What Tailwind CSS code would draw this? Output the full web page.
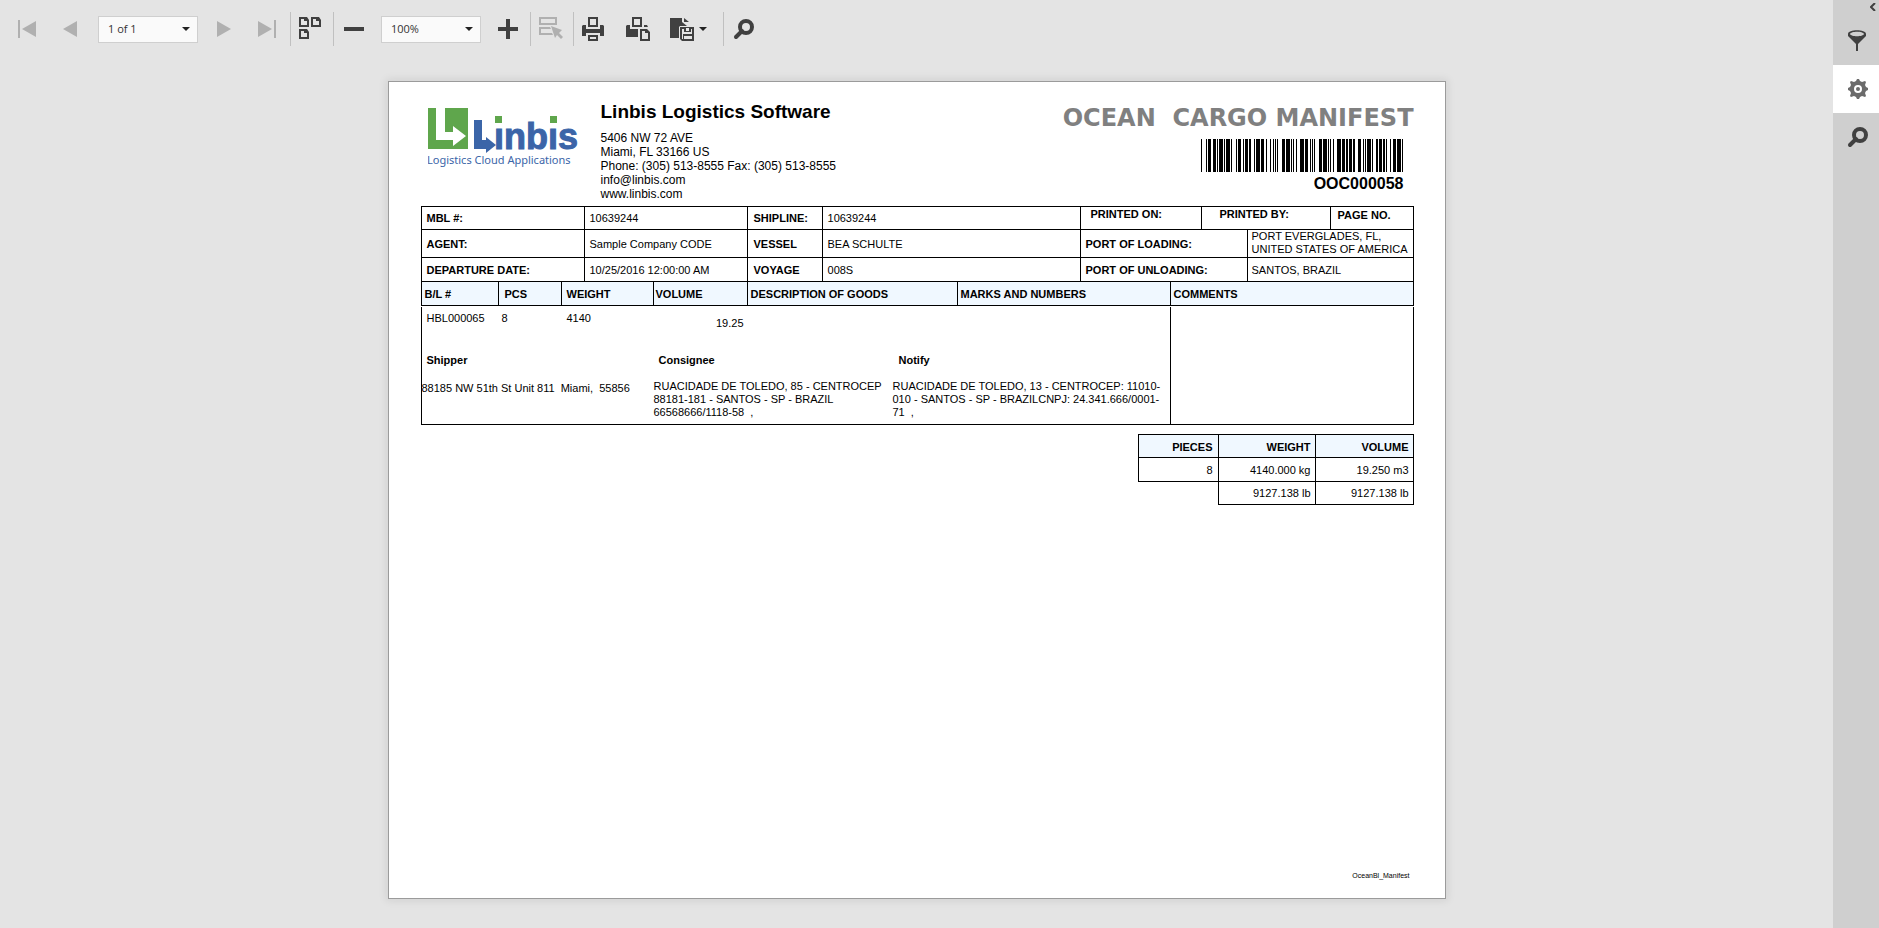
<!DOCTYPE html>
<html lang="en">
<head>
<meta charset="utf-8">
<title>Ocean Cargo Manifest</title>
<script src="https://cdn.jsdelivr.net/npm/@tailwindcss/browser@4"></script>
</head>
<body class="flex min-h-screen bg-[#e4e4e4] font-['Liberation_Sans',Arial,sans-serif] text-black">
<main class="min-w-0 flex-1">
  <!-- Viewer toolbar -->
  <div role="toolbar" aria-label="Report viewer" class="flex h-[58px] items-center pl-[5px] text-[#404040]">
    <button aria-label="First page" class="flex w-11 justify-center text-[#b0b0b0]"><svg class="size-6" viewBox="0 0 24 24" fill="currentColor"><path d="M3 3h2v18H3zM21 4v16L7 12z"/></svg></button>
    <button aria-label="Previous page" class="flex w-11 justify-center text-[#b0b0b0]"><svg class="size-6" viewBox="0 0 24 24" fill="currentColor"><path d="M18 4v16L4 12z"/></svg></button>
    <div class="relative ml-[5px]">
      <select aria-label="Page" class="block h-[27px] w-[100px] appearance-none rounded-none border border-[#cfcfcf] bg-[#fafafa] pl-[9px] font-['Open_Sans',sans-serif] text-[11px] text-[#333]"><option>1 of 1</option></select>
      <svg class="pointer-events-none absolute top-[11px] right-2 h-1 w-2" viewBox="0 0 8 4" fill="#222"><path d="M0 0h8L4 4z"/></svg>
    </div>
    <button aria-label="Next page" class="ml-1 flex w-11 justify-center text-[#b0b0b0]"><svg class="size-6" viewBox="0 0 24 24" fill="currentColor"><path d="M5 4l14 8-14 8z"/></svg></button>
    <button aria-label="Last page" class="flex w-11 justify-center text-[#b0b0b0]"><svg class="size-6" viewBox="0 0 24 24" fill="currentColor"><path d="M2 4l14 8-14 8zM18 3h2v18h-2z"/></svg></button>
    <div class="h-[34px] w-px bg-[#c0c0c0]"></div>
    <button aria-label="Toggle multipage mode" class="flex w-10 justify-center"><svg class="size-6" viewBox="0 0 24 24" fill="currentColor" fill-rule="evenodd"><path d="M0 0h8l2 3v7H0zM2 2v6h6V4H5V2zM12 0h8l2 3v7H12zM14 2v6h6V4h-3V2zM0 12h8l2 3v7H0zM2 14v6h6v-4H5v-2z"/></svg></button>
    <div class="ml-0.5 h-[34px] w-px bg-[#c0c0c0]"></div>
    <button aria-label="Zoom out" class="flex w-10 justify-center"><svg class="size-6" viewBox="0 0 24 24" fill="currentColor"><path d="M2 10h20v4H2z"/></svg></button>
    <div class="relative ml-[7px]">
      <select aria-label="Zoom" class="block h-[27px] w-[100px] appearance-none rounded-none border border-[#cfcfcf] bg-[#fafafa] pl-[9px] font-['Open_Sans',sans-serif] text-[11px] text-[#333]"><option>100%</option></select>
      <svg class="pointer-events-none absolute top-[11px] right-2 h-1 w-2" viewBox="0 0 8 4" fill="#222"><path d="M0 0h8L4 4z"/></svg>
    </div>
    <button aria-label="Zoom in" class="ml-[7px] flex w-10 justify-center"><svg class="size-6" viewBox="0 0 24 24" fill="currentColor"><path d="M2 10h8V2h4v8h8v4h-8v8h-4v-8H2z"/></svg></button>
    <div class="ml-0.5 h-[34px] w-px bg-[#c0c0c0]"></div>
    <button aria-label="Highlight editing fields" class="flex w-10 justify-center text-[#b0b0b0]"><svg class="size-6" viewBox="0 0 24 24" fill="currentColor" fill-rule="evenodd"><path d="M0 0h18v8H0zM2 2v4h14V2zM0 10h11l1 2H2v4h11l1 2H0zM12 9l11 4-3 3 4 4-2 2-4-4-2 3z"/></svg></button>
    <div class="ml-0.5 h-[34px] w-px bg-[#c0c0c0]"></div>
    <button aria-label="Print" class="flex w-10 justify-center"><svg class="size-6" viewBox="0 0 24 24" fill="currentColor" fill-rule="evenodd"><path d="M6 0h10v10H6zM8 2v6h6V2zM1 8h3v4h14V8h3l1 1v10h-4v-3H4v3H0V9zM6 18h10v6H6zM8 20v2h6v-2z"/></svg></button>
    <button aria-label="Print page" class="flex w-12 justify-center"><svg class="size-6" viewBox="0 0 24 24" fill="currentColor" fill-rule="evenodd"><path d="M6 0h10v10H6zM8 2v6h6V2zM1 8h3v4h8v8H0V9zM18 8h3l1 2h-4zM14 12h7l3 3v9H14zM16 14v8h6v-6h-3v-2z"/></svg></button>
    <button aria-label="Export to" class="flex w-[61px] items-center gap-[5px] pl-2"><svg class="size-6" viewBox="0 0 24 24" fill="currentColor" fill-rule="evenodd"><path d="M0 1h12v4l5 4H10l-1 1v11H0zM14 1l5 4h-5zM10 10h14v14H12l-2-2zM12 12v10h1v-5h9v-5h-1v3h-7v-3zM16 11h3v3h-3zM14 19v3h8v-3z"/></svg><svg class="h-1 w-2" viewBox="0 0 8 4" fill="#222"><path d="M0 0h8L4 4z"/></svg></button>
    <div class="h-[34px] w-px bg-[#c0c0c0]"></div>
    <button aria-label="Search" class="flex w-10 justify-center"><svg class="size-6" viewBox="0 0 24 24" fill="none" stroke="currentColor" stroke-width="4"><circle cx="14" cy="10" r="6"/><path d="M10 14l-6 6" stroke-linecap="round"/></svg></button>
  </div>

  <!-- Report sheet -->
  <article class="mx-auto mt-[23px] flex min-h-[818px] w-[1058px] flex-col border border-[#9b9b9b] bg-white pr-[31px] pl-8 text-[11px] leading-[13px] shadow-[0_0_8px_2px_rgba(0,0,0,0.08)]">
    <header class="flex h-[124px] items-start">
      <svg class="mt-[26px] ml-[7px] h-[60px] w-[154px] shrink-0" viewBox="0 0 154 60" role="img" aria-label="Linbis Logistics Cloud Applications">
        <path fill="#5fa64c" fill-rule="evenodd" d="M0 0h40v41H0zM8 0v32h17v6l13-10-13-10v6h-8V0z"/>
        <path fill="#3b65a8" d="M46 12h8v20h4v-3l10 8-10 8v-4H46z"/>
        <text x="66" y="41" fill="#3b65a8" stroke="#3b65a8" class="font-['Liberation_Sans',sans-serif] text-[36px] font-bold">ınbıs</text>
        <path fill="#5fa64c" d="M67 8h7v7h-7zM122 8h7v7h-7z"/>
        <text x="-1" y="56" fill="#3b65a8" class="font-['Noto_Sans',sans-serif] text-[11px]">Logistics Cloud Applications</text>
      </svg>
      <div class="ml-[19px] pt-[18px]">
        <h2 class="text-[19px] leading-6 font-bold">Linbis Logistics Software</h2>
        <address class="mt-[7px] text-xs leading-[14px] whitespace-pre not-italic">5406 NW 72 AVE
Miami, FL 33166 US
Phone: (305) 513-8555 Fax: (305) 513-8555
info@linbis.com
www.linbis.com</address>
      </div>
      <div class="ml-auto flex flex-col items-end pt-[22px]">
        <h1 class="font-['DejaVu_Sans',sans-serif] text-2xl leading-7 font-bold whitespace-pre text-[#808080]">OCEAN  CARGO MANIFEST</h1>
        <svg class="mt-[7px] mr-[11px] h-[33px] w-[202px]" viewBox="0 0 175 33" preserveAspectRatio="none" shape-rendering="crispEdges" role="img" aria-label="Barcode OOC000058"><path id="bars"/></svg>
        <p class="mr-[10px] text-base leading-6 font-bold">OOC000058</p>
      </div>
    </header>

    <table class="w-full table-fixed border-collapse text-left">
      <colgroup><col class="w-[77px]"><col class="w-[63px]"><col class="w-[23px]"><col class="w-[69px]"><col class="w-[94px]"><col class="w-[75px]"><col class="w-[135px]"><col class="w-[123px]"><col class="w-[90px]"><col class="w-[31px]"><col class="w-[46px]"><col class="w-[83px]"><col class="w-[83px]"></colgroup>
      <tbody>
        <tr class="h-[23px]">
          <th colspan="3" class="border border-black pl-[5px]">MBL #:</th><td colspan="2" class="border border-black pl-[5px]">10639244</td>
          <th class="border border-black pl-[6px]">SHIPLINE:</th><td colspan="2" class="border border-black pl-[5px]">10639244</td>
          <th colspan="2" class="border border-black pb-2 pl-[10px]">PRINTED ON:</th><th colspan="2" class="border border-black pb-2 pl-[18px]">PRINTED BY:</th><th class="border border-black pb-1.5 pl-[7px]">PAGE NO.</th>
        </tr>
        <tr class="h-7">
          <th colspan="3" class="border border-black pt-px pl-[5px]">AGENT:</th><td colspan="2" class="border border-black pt-px pl-[5px]">Sample Company CODE</td>
          <th class="border border-black pt-px pl-[6px]">VESSEL</th><td colspan="2" class="border border-black pt-px pl-[5px]">BEA SCHULTE</td>
          <th colspan="3" class="border border-black pt-px pl-[5px]">PORT OF LOADING:</th><td colspan="2" class="border border-black pb-px pl-1">PORT EVERGLADES, FL,<br>UNITED STATES OF AMERICA</td>
        </tr>
        <tr class="h-6">
          <th colspan="3" class="border border-black pt-0.5 pl-[5px]">DEPARTURE DATE:</th><td colspan="2" class="border border-black pt-0.5 pl-[5px]">10/25/2016 12:00:00 AM</td>
          <th class="border border-black pt-0.5 pl-[6px]">VOYAGE</th><td colspan="2" class="border border-black pt-0.5 pl-[5px]">008S</td>
          <th colspan="3" class="border border-black pt-0.5 pl-[5px]">PORT OF UNLOADING:</th><td colspan="2" class="border border-black pt-0.5 pl-1">SANTOS, BRAZIL</td>
        </tr>
        <tr class="h-6 bg-[#f0f8ff]">
          <th class="border border-black pt-0.5 pl-[3px]">B/L #</th><th class="border border-black pt-0.5 pl-[6px]">PCS</th><th colspan="2" class="border border-black pt-0.5 pl-[5px]">WEIGHT</th><th class="border border-black pt-0.5 pl-0.5">VOLUME</th>
          <th colspan="2" class="border border-black pt-0.5 pl-[3px]">DESCRIPTION OF GOODS</th><th colspan="2" class="border border-black pt-0.5 pl-[3px]">MARKS AND NUMBERS</th><th colspan="4" class="border border-black pt-0.5 pl-[3px]">COMMENTS</th>
        </tr>
      </tbody>
    </table>

    <section class="mt-px flex h-[118px] border-x border-b border-black">
      <div class="w-[749px] border-r border-black">
        <div class="flex pt-[5px] pl-px">
          <p class="w-[75px] pl-1">HBL000065</p><p class="w-[65px] pl-1">8</p><p class="w-[90px] pl-1">4140</p><p class="w-[91px] pt-[5px] text-right">19.25</p>
        </div>
        <div class="mt-6 grid grid-cols-[232px_239px_1fr]">
          <div><h3 class="pl-[5px] font-bold">Shipper</h3><p class="mt-[15px] whitespace-pre">88185 NW 51th St Unit 811  Miami,  55856</p></div>
          <div><h3 class="pl-[5px] font-bold">Consignee</h3><p class="mt-[13px] whitespace-pre">RUACIDADE DE TOLEDO, 85 - CENTROCEP
88181-181 - SANTOS - SP - BRAZIL
66568666/1118-58  ,</p></div>
          <div><h3 class="pl-[6px] font-bold">Notify</h3><p class="mt-[13px] whitespace-pre">RUACIDADE DE TOLEDO, 13 - CENTROCEP: 11010-
010 - SANTOS - SP - BRAZILCNPJ: 24.341.666/0001-
71  ,</p></div>
        </div>
      </div>
    </section>

    <table class="mt-[9px] w-[276px] table-fixed border-collapse self-end text-right">
      <colgroup><col class="w-[80px]"><col class="w-[97px]"><col class="w-[98px]"></colgroup>
      <thead><tr class="h-[23px] bg-[#f0f8ff]"><th class="border border-black pt-0.5 pr-[5px]">PIECES</th><th class="border border-black pt-0.5 pr-1">WEIGHT</th><th class="border border-black pt-0.5 pr-1">VOLUME</th></tr></thead>
      <tbody>
        <tr class="h-6"><td class="border border-black pt-0.5 pr-[5px]">8</td><td class="border border-black pt-0.5 pr-1">4140.000 kg</td><td class="border border-black pt-0.5 pr-1">19.250 m3</td></tr>
        <tr class="h-[23px]"><td></td><td class="border border-black pr-1">9127.138 lb</td><td class="border border-black pr-1">9127.138 lb</td></tr>
      </tbody>
    </table>
    <footer class="mt-auto mr-1 pb-4 text-right text-[7px]">OceanBl_Manifest</footer>
  </article>
</main>

<!-- Side panel tabs -->
<aside class="flex w-[46px] shrink-0 flex-col bg-[#cfcfcf] text-[#404040]">
  <button aria-label="Collapse panel" class="flex h-[17px] justify-end pt-[3px] pr-[3px]"><svg class="h-2 w-[6px]" viewBox="0 0 6 8" fill="none" stroke="currentColor" stroke-width="2"><path d="M5 0L1 4l4 4"/></svg></button>
  <button aria-label="Parameters" class="flex h-12 items-center justify-center pl-1"><svg class="size-6" viewBox="0 0 24 24" fill="currentColor"><path fill-rule="evenodd" d="M2 5c0-5 18-5 18 0v2l-8 8v7h-2v-7L2 7zM4 5c1 3 13 3 14 0-1-3-13-3-14 0z"/></svg></button>
  <button aria-label="Settings" class="flex h-12 items-center justify-center bg-white pl-1 text-[#6b6b6b]"><svg class="size-6" viewBox="0 0 24 24" fill="currentColor"><path fill-rule="evenodd" d="M10 4l1-2h2l1 2 2 1 3-1 1 1-1 3 1 2 2 1v2l-2 1-1 2 1 3-1 1-3-1-2 1-1 2h-2l-1-2-2-1-3 1-1-1 1-3-1-2-2-1v-2l2-1 1-2-1-3 1-1 3 1zM12 8a4 4 0 100 8 4 4 0 000-8z"/><circle cx="12" cy="12" r="2"/></svg></button>
  <button aria-label="Search document" class="flex h-12 items-center justify-center pl-0.5"><svg class="size-6" viewBox="0 0 24 24" fill="none" stroke="currentColor" stroke-width="4"><circle cx="15" cy="10" r="6"/><path d="M11 14l-6 6" stroke-linecap="round"/></svg></button>
</aside>

<script>
  // Code 39: nine alternating bars and spaces per character, 1 marks a wide one.
  const code39 = { '*': '010010100', O: '100010010', C: '101001000', 0: '000110100', 5: '100110000', 8: '100100100' };
  let x = 0, d = '';
  for (const ch of '*OOC000058*') {
    [...code39[ch]].forEach((bit, i) => {
      const w = bit === '1' ? 3 : 1;
      if (i % 2 === 0) d += `M${x} 0h${w}v33h-${w}z`;
      x += w;
    });
    x += 1;
  }
  document.getElementById('bars').setAttribute('d', d);
</script>
</body>
</html>
